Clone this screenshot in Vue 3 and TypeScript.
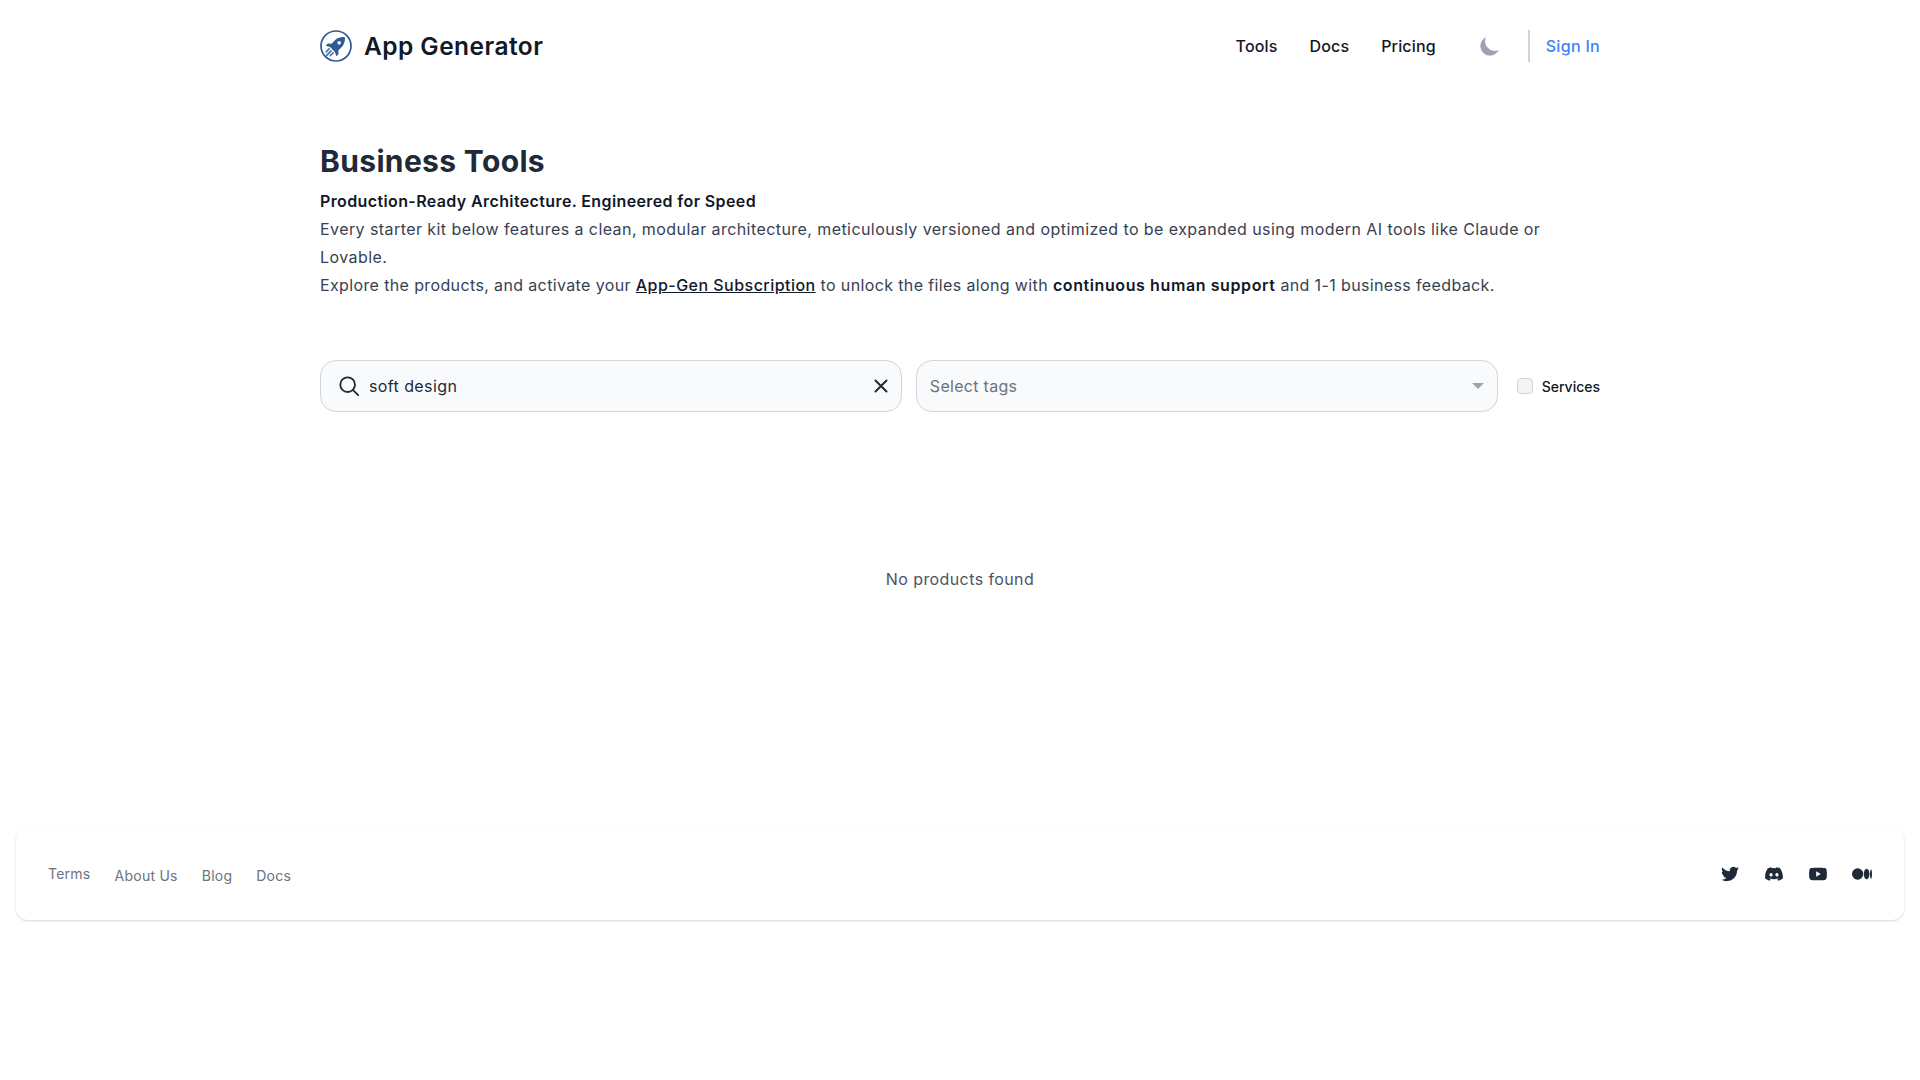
<script setup lang="ts">
const navLinks = ["Tools", "Docs", "Pricing"]
const footerLinks = ["About Us", "Blog", "Docs"]
</script>

<template>
  <div class="page">
    <header class="top">
      <a class="brand">
        <svg class="logo" viewBox="0 0 32 32" fill="none">
          <circle cx="16" cy="16" r="15" stroke="#2f5a94" stroke-width="1.7" />
          <g transform="rotate(45 16 16)">
            <path d="M16 3.500C19.300 6 20.800 10 20.800 13V17.500L23.500 20V23L19.500 21H12.500L8.500 23V20L11.200 17.500V13C11.200 10 12.700 6 16 3.500z" fill="#2f5a94" />
            <circle cx="16" cy="11.500" r="1.800" fill="#fff" />
            <path d="M13.200 23v4M16 23v6.500M18.800 23v4" stroke="#4a75ac" stroke-width="1.700" stroke-linecap="round" />
          </g>
        </svg>
        <span class="brand-name">App Generator</span>
      </a>
      <nav class="nav">
        <a v-for="link in navLinks" :key="link" class="nav-link">{{ link }}</a>
        <svg class="moon" viewBox="0 0 20 20">
          <path d="M17.293 13.293A8 8 0 0 1 6.707 2.707a8.001 8.001 0 1 0 10.586 10.586z" fill="#9ca3af" />
        </svg>
        <span class="divider"></span>
        <a class="sign-in">Sign In</a>
      </nav>
    </header>

    <main class="content">
      <h1>Business Tools</h1>
      <p class="lead"><strong class="tagline">Production-Ready Architecture. Engineered for Speed</strong></p>
      <p class="lead">Every starter kit below features a clean, modular architecture, meticulously versioned and optimized to be expanded using modern AI tools like Claude or Lovable.</p>
      <p class="lead explore">Explore the products, and activate your <a class="sub-link">App-Gen Subscription</a> to unlock the files along with <strong>continuous human support</strong> and 1-1 business feedback.</p>

      <div class="filters">
        <div class="field search">
          <svg class="search-icon" viewBox="0 0 24 24" fill="none" stroke="#1f2937" stroke-width="2" stroke-linecap="round">
            <circle cx="10.500" cy="10.500" r="8" />
            <path d="M17 17l5 5" />
          </svg>
          <input class="search-input" value="soft design" />
          <svg class="clear-icon" viewBox="0 0 16 16" fill="none" stroke="#1f2937" stroke-width="2" stroke-linecap="round">
            <path d="M2.500 2.500l11 11M13.500 2.500l-11 11" />
          </svg>
        </div>
        <div class="field select">
          <span class="placeholder">Select tags</span>
          <span class="caret"></span>
        </div>
        <label class="check">
          <span class="box"></span>
          <span class="check-label">Services</span>
        </label>
      </div>

      <p class="empty">No products found</p>
    </main>

    <footer class="foot">
      <div class="foot-links">
        <a class="terms">Terms</a>
        <a v-for="link in footerLinks" :key="link" class="foot-link">{{ link }}</a>
      </div>
      <div class="socials">
        <svg viewBox="-1.500 -1.500 27 27" fill="#1f2937">
          <path d="M23.950 4.570a10 10 0 0 1-2.820.780 4.960 4.960 0 0 0 2.160-2.720c-.950.550-2 .950-3.130 1.180a4.920 4.920 0 0 0-8.380 4.480C7.690 8.090 4.070 6.130 1.640 3.160a4.820 4.820 0 0 0-.660 2.470c0 1.710.870 3.210 2.190 4.100a4.900 4.900 0 0 1-2.230-.620v.060a4.920 4.920 0 0 0 3.950 4.830 5 5 0 0 1-2.210.080 4.940 4.940 0 0 0 4.600 3.420A9.870 9.870 0 0 1 0 19.540a14 14 0 0 0 7.560 2.210c9.050 0 14-7.500 14-13.980 0-.210 0-.420-.020-.630a9.940 9.940 0 0 0 2.410-2.570z" />
        </svg>
        <svg viewBox="-1.500 -1.500 27 27" fill="#1f2937">
          <path d="M20.320 4.370a19.800 19.800 0 0 0-4.890-1.520.070.070 0 0 0-.080.040c-.210.380-.440.870-.610 1.250a18.300 18.300 0 0 0-5.490 0 12.600 12.600 0 0 0-.620-1.250.080.080 0 0 0-.080-.040 19.700 19.700 0 0 0-4.890 1.520.070.070 0 0 0-.030.030C.530 9.050-.320 13.580.100 18.060a.080.080 0 0 0 .030.060 19.900 19.900 0 0 0 6 3.030.080.080 0 0 0 .080-.030c.460-.630.870-1.290 1.230-1.990a.080.080 0 0 0-.040-.110 13.100 13.100 0 0 1-1.870-.890.080.080 0 0 1-.010-.130c.130-.090.250-.190.370-.290a.070.070 0 0 1 .080-.010c3.930 1.790 8.180 1.790 12.060 0a.070.070 0 0 1 .080.010c.120.100.250.200.370.290a.080.080 0 0 1-.010.130c-.600.350-1.220.640-1.870.890a.080.080 0 0 0-.040.110c.360.700.780 1.360 1.230 1.990a.080.080 0 0 0 .080.030 19.800 19.800 0 0 0 6-3.030.080.080 0 0 0 .030-.050c.500-5.180-.840-9.670-3.550-13.660a.060.060 0 0 0-.030-.030zM8.020 15.330c-1.180 0-2.160-1.090-2.160-2.420 0-1.330.960-2.420 2.160-2.420 1.210 0 2.180 1.100 2.160 2.420 0 1.330-.960 2.420-2.160 2.420zm7.970 0c-1.180 0-2.160-1.090-2.160-2.420 0-1.330.960-2.420 2.160-2.420 1.210 0 2.180 1.100 2.160 2.420 0 1.330-.950 2.420-2.160 2.420z" />
        </svg>
        <svg viewBox="-1.500 -1.500 27 27" fill="#1f2937">
          <path d="M23.500 6.190a3.020 3.020 0 0 0-2.120-2.140C19.500 3.550 12 3.550 12 3.550s-7.500 0-9.380.5A3.020 3.020 0 0 0 .5 6.190C0 8.070 0 12 0 12s0 3.930.5 5.810a3.020 3.020 0 0 0 2.120 2.140c1.880.5 9.380.5 9.380.5s7.500 0 9.380-.5a3.020 3.020 0 0 0 2.120-2.140C24 15.930 24 12 24 12s0-3.930-.5-5.810zM9.550 15.570V8.430L15.820 12l-6.270 3.570z" />
        </svg>
        <svg viewBox="0 0 24 24" fill="#1f2937">
          <path d="M13.540 12a6.800 6.800 0 0 1-6.770 6.820A6.800 6.800 0 0 1 0 12a6.800 6.800 0 0 1 6.770-6.820A6.800 6.800 0 0 1 13.540 12zm7.420 0c0 3.540-1.510 6.420-3.390 6.420S14.180 15.540 14.180 12s1.510-6.420 3.390-6.420 3.390 2.880 3.390 6.420zM24 12c0 3.170-.530 5.750-1.190 5.750-.660 0-1.190-2.580-1.190-5.750s.530-5.750 1.190-5.750C23.470 6.250 24 8.830 24 12z" />
        </svg>
      </div>
    </footer>
  </div>
</template>

<style>
html,
body {
  background: #fff;
}
</style>

<style scoped>
.page {
  font-family: Inter, "Noto Sans", sans-serif;
  color: #1f2937;
  min-height: 1080px;
  padding-top: 16px;
  box-sizing: border-box;
}

.top {
  width: 1280px;
  height: 60px;
  margin: 0 auto;
  display: flex;
  align-items: center;
  justify-content: space-between;
}

.brand {
  display: flex;
  align-items: center;
  gap: 12px;
}

.logo {
  width: 32px;
  height: 32px;
}

.brand-name {
  font-size: 24.500px;
  font-weight: 600;
  letter-spacing: 0.45px;
  color: #111827;
}

.nav {
  display: flex;
  align-items: center;
}

.nav-link {
  font-size: 16px;
  font-weight: 500;
  letter-spacing: 0.15px;
  color: #111827;
  margin-right: 32px;
}

.moon {
  width: 24px;
  height: 24px;
  margin-left: 10px;
}

.divider {
  width: 2px;
  height: 32px;
  background: #d1d5db;
  margin: 0 16px 0 26px;
}

.sign-in {
  font-size: 16px;
  font-weight: 500;
  letter-spacing: 0.3px;
  color: #3b82f6;
}

.content {
  width: 1280px;
  margin: 0 auto;
}

h1 {
  font-size: 30px;
  line-height: 36px;
  font-weight: 700;
  letter-spacing: 0.35px;
  margin: 67px 0 8px;
  color: #1f2937;
}

.lead {
  font-size: 16px;
  line-height: 28px;
  letter-spacing: 0.43px;
  margin: 0;
  color: #374151;
}

.lead.explore {
  letter-spacing: 0.37px;
}

.lead strong {
  font-weight: 600;
  letter-spacing: 0.6px;
  color: #111827;
}

.lead .tagline {
  letter-spacing: 0.38px;
}

.sub-link {
  font-weight: 500;
  letter-spacing: 0.47px;
  color: #111827;
  text-decoration: underline;
}

.filters {
  display: flex;
  align-items: center;
  gap: 14px;
  margin-top: 61px;
}

.field {
  flex: 1;
  height: 52px;
  box-sizing: border-box;
  display: flex;
  align-items: center;
  background: #f9fafb;
  border: 1px solid #d1d5db;
  border-radius: 16px;
  padding: 0 13px;
}

.search-icon {
  width: 22px;
  height: 22px;
  flex: none;
  margin-left: 4px;
}

.search-input {
  flex: 1;
  min-width: 0;
  border: 0;
  outline: 0;
  background: transparent;
  font: 400 16px Inter, "Noto Sans", sans-serif;
  letter-spacing: 0.4px;
  color: #1f2937;
  margin-left: 9px;
  padding: 0;
}

.clear-icon {
  width: 16px;
  height: 16px;
  flex: none;
  margin-right: -1px;
}

.select {
  justify-content: space-between;
}

.placeholder {
  font-size: 16px;
  letter-spacing: 0.3px;
  color: #6b7280;
}

.caret {
  width: 0;
  height: 0;
  border-left: 6px solid transparent;
  border-right: 6px solid transparent;
  border-top: 6px solid #9ca3af;
}

.check {
  display: flex;
  align-items: center;
  gap: 9px;
  margin-left: 5px;
}

.box {
  width: 16px;
  height: 16px;
  box-sizing: border-box;
  background: #f3f4f6;
  border: 1px solid #d1d5db;
  border-radius: 4px;
}

.check-label {
  font-size: 14px;
  font-weight: 500;
  color: #111827;
}

.empty {
  margin: 155px 0 0;
  text-align: center;
  font-size: 16px;
  line-height: 24px;
  letter-spacing: 0.4px;
  color: #4b5563;
}

.foot {
  position: absolute;
  left: 16px;
  right: 16px;
  top: 828px;
  height: 92px;
  box-sizing: border-box;
  padding: 0 32px;
  display: flex;
  align-items: center;
  justify-content: space-between;
  background: #fff;
  border-radius: 12px;
  box-shadow: 0 1px 3px rgba(0, 0, 0, 0.1), 0 1px 2px rgba(0, 0, 0, 0.06);
}

.foot-links {
  display: flex;
  align-items: flex-start;
  gap: 24px;
  margin-top: 2px;
  font-size: 14px;
  line-height: 20px;
  letter-spacing: 0.25px;
  color: #6b7280;
}

.foot-link {
  margin-top: 2px;
}

.socials {
  display: flex;
  align-items: center;
  gap: 24px;
}

.socials svg {
  width: 20px;
  height: 20px;
}
</style>
